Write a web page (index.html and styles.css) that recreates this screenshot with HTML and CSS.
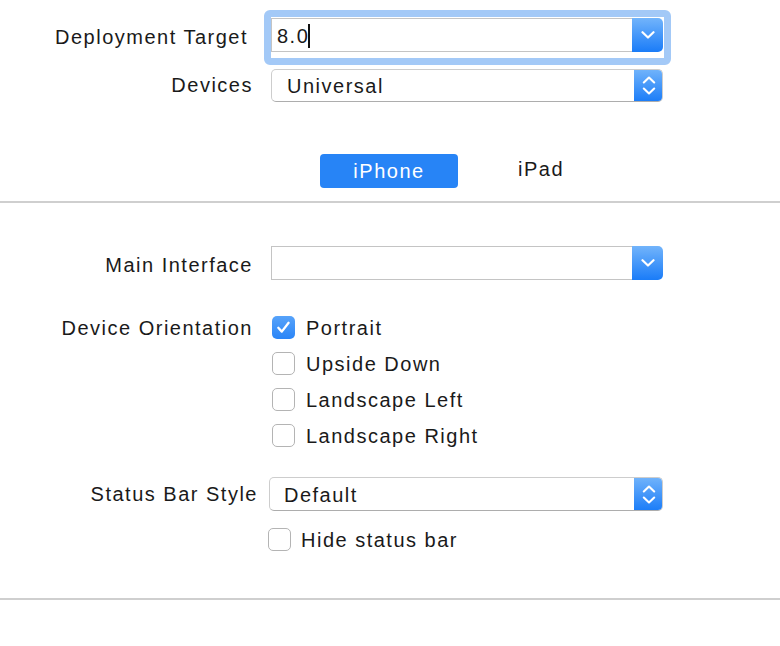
FILE: index.html
```html
<!DOCTYPE html>
<html>
<head>
<meta charset="utf-8">
<link rel="stylesheet" href="styles.css">
</head>
<body>
<div class="page">
  <section class="top">
    <div class="row">
      <div class="label label-target">Deployment Target</div>
      <div class="focus">
        <div class="combo">
          <div class="combo-field"><span class="combo-text">8.0</span><span class="caret"></span></div>
          <div class="btn btn-combo">
            <svg width="14" height="8" viewBox="0 0 14 8"><path d="M1.5 1.2 L7 6.5 L12.5 1.2" fill="none" stroke="#fff" stroke-width="2.2" stroke-linecap="round" stroke-linejoin="round"/></svg>
          </div>
        </div>
      </div>
    </div>
    <div class="row row-devices">
      <div class="label">Devices</div>
      <div class="popup">
        <span class="popup-text">Universal</span>
        <div class="btn btn-popup">
          <svg width="14" height="19" viewBox="0 0 14 19"><path d="M1.8 6.5 L7 1.6 L12.2 6.5 M1.8 12.5 L7 17.4 L12.2 12.5" fill="none" stroke="#fff" stroke-width="2.1" stroke-linecap="round" stroke-linejoin="round"/></svg>
        </div>
      </div>
    </div>
    <div class="segments">
      <span class="seg seg-active">iPhone</span>
      <span class="seg seg-plain">iPad</span>
    </div>
  </section>
  <div class="sep"></div>
  <section class="bottom">
    <div class="row">
      <div class="label label-main">Main Interface</div>
      <div class="combo">
        <div class="combo-field"></div>
        <div class="btn btn-combo">
          <svg width="14" height="8" viewBox="0 0 14 8"><path d="M1.5 1.2 L7 6.5 L12.5 1.2" fill="none" stroke="#fff" stroke-width="2.2" stroke-linecap="round" stroke-linejoin="round"/></svg>
        </div>
      </div>
    </div>
    <div class="row row-orient">
      <div class="label label-orient">Device Orientation</div>
      <div class="checks">
        <label class="check"><span class="box box-on"><svg width="23" height="23" viewBox="0 0 23 23"><path d="M6.3 11.8 L9.8 15.6 L16.6 6.8" fill="none" stroke="#fff" stroke-width="2.3" stroke-linecap="round" stroke-linejoin="round"/></svg></span><span class="check-text">Portrait</span></label>
        <label class="check"><span class="box"></span><span class="check-text">Upside Down</span></label>
        <label class="check"><span class="box"></span><span class="check-text">Landscape Left</span></label>
        <label class="check"><span class="box"></span><span class="check-text">Landscape Right</span></label>
      </div>
    </div>
    <div class="row row-status">
      <div class="label label-status">Status Bar Style</div>
      <div class="popup popup-status">
        <span class="popup-text popup-text-status">Default</span>
        <div class="btn btn-popup">
          <svg width="14" height="19" viewBox="0 0 14 19"><path d="M1.8 6.5 L7 1.6 L12.2 6.5 M1.8 12.5 L7 17.4 L12.2 12.5" fill="none" stroke="#fff" stroke-width="2.1" stroke-linecap="round" stroke-linejoin="round"/></svg>
        </div>
      </div>
    </div>
    <div class="row row-hide">
      <label class="check"><span class="box"></span><span class="check-text">Hide status bar</span></label>
    </div>
  </section>
  <div class="sep"></div>
</div>
</body>
</html>
```
FILE: styles.css
```css
html, body {
  margin: 0;
  padding: 0;
  background: #ffffff;
}
body {
  width: 780px;
  height: 646px;
  overflow: hidden;
  font-family: "Liberation Sans", Arial, sans-serif;
  font-size: 20px;
  letter-spacing: 1.5px;
  color: #1a1a1a;
}
.top {
  padding-top: 10px;
  padding-bottom: 13px;
}
.bottom {
  padding-top: 43px;
  padding-bottom: 47px;
}
.sep {
  height: 2px;
  background: #cfcfcf;
}
.row {
  display: flex;
  align-items: center;
}
.label {
  width: 253px;
  margin-right: 18px;
  text-align: right;
  white-space: nowrap;
  flex: none;
}
.label-target {
  width: 248px;
  margin-right: 16px;
  margin-top: 0;
}
.label-main {
  margin-top: 5px;
}
.focus {
  border: 7px solid #a3c9f7;
  border-radius: 6px;
  padding-top: 1px;
  padding-bottom: 6px;
  padding-right: 1px;
}
.combo {
  display: flex;
  width: 392px;
  height: 34px;
}
.combo-field {
  flex: 1;
  box-sizing: border-box;
  height: 34px;
  border: 1px solid #c4c4c4;
  border-right: none;
  display: flex;
  align-items: center;
  padding-left: 5px;
  padding-top: 3px;
}
.caret {
  display: inline-block;
  width: 1.5px;
  height: 24px;
  background: #111;
  margin-left: -1px;
  margin-top: -2px;
}
.btn {
  display: flex;
  align-items: center;
  justify-content: center;
  background: linear-gradient(#72b4fb, #1a7cf8);
  flex: none;
}
.btn-combo {
  width: 31px;
  height: 34px;
  border-radius: 0 5px 5px 0;
}
.row-devices {
  margin-top: 4px;
}
.popup {
  display: flex;
  align-items: center;
  box-sizing: border-box;
  width: 392px;
  height: 33px;
  border: 1px solid #cdcdcd;
  border-bottom-color: #adadad;
  border-radius: 5px;
  overflow: hidden;
  background: #fff;
}
.popup-text {
  flex: 1;
  padding-left: 15px;
  padding-top: 2px;
}
.btn-popup {
  width: 29px;
  height: 33px;
  margin: -1px -1px -1px 0;
}
.segments {
  display: flex;
  align-items: center;
  margin-top: 52px;
  padding-left: 320px;
}
.seg {
  line-height: 34px;
  height: 34px;
}
.seg-active {
  width: 138px;
  background: #2784f6;
  color: #fff;
  border-radius: 4px;
  text-align: center;
}
.seg-plain {
  margin-left: 60px;
  margin-top: -5px;
  color: #1a1a1a;
}
.row-orient {
  margin-top: 36px;
  align-items: flex-start;
}
.label-orient {
  line-height: 23px;
  padding-top: 1px;
}
.checks {
  display: flex;
  flex-direction: column;
  gap: 13px;
  padding-left: 1px;
}
.check {
  display: flex;
  align-items: center;
  height: 23px;
}
.box {
  box-sizing: border-box;
  width: 23px;
  height: 23px;
  border: 1px solid #b4b4b4;
  border-radius: 5px;
  background: #fff;
  flex: none;
  display: flex;
}
.box-on {
  border: none;
  background: linear-gradient(#57a3fa, #2a85f7);
}
.check-text {
  margin-left: 11px;
  line-height: 23px;
  padding-top: 1px;
}
.row-status {
  margin-top: 30px;
}
.label-status {
  width: 258px;
  margin-right: 11px;
}
.popup-status {
  width: 394px;
  height: 34px;
}
.popup-status .btn-popup {
  height: 34px;
}
.popup-text-status {
  padding-left: 14px;
}
.row-hide {
  margin-top: 17px;
  padding-left: 268px;
}
.row-hide .check-text {
  margin-left: 10px;
}
```
